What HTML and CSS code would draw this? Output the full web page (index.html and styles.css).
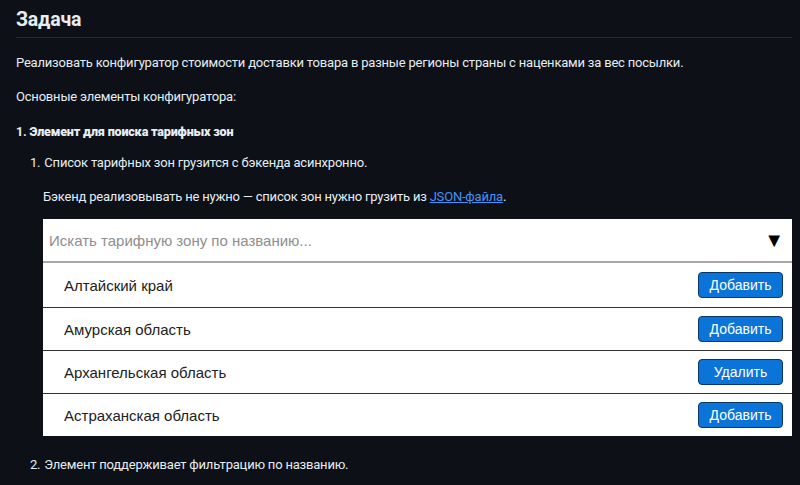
FILE: index.html
```html
<!DOCTYPE html>
<html lang="ru">
<head>
<meta charset="utf-8">
<link rel="stylesheet" href="styles.css">
</head>
<body>
<div class="page">
  <h2 class="title">Задача</h2>
  <p class="p p-first">Реализовать конфигуратор стоимости доставки товара в разные регионы страны с наценками за вес посылки.</p>
  <p class="p">Основные элементы конфигуратора:</p>
  <div class="item l1"><span class="num">1.</span><strong>Элемент для поиска тарифных зон</strong></div>
  <div class="item l2"><span class="num">1.</span>Список тарифных зон грузится с бэкенда асинхронно.</div>
  <div class="sub">
    <p class="p p-sub">Бэкенд реализовывать не нужно — список зон нужно грузить из <a class="link" href="#">JSON-файла</a>.</p>
    <div class="widget">
      <div class="search">
        <span class="placeholder">Искать тарифную зону по названию...</span>
        <span class="arrow">▼</span>
      </div>
      <div class="row first"><span class="name">Алтайский край</span><button class="btn">Добавить</button></div>
      <div class="row"><span class="name">Амурская область</span><button class="btn">Добавить</button></div>
      <div class="row"><span class="name">Архангельская область</span><button class="btn">Удалить</button></div>
      <div class="row"><span class="name">Астраханская область</span><button class="btn">Добавить</button></div>
    </div>
  </div>
  <div class="item l2 last"><span class="num">2.</span>Элемент поддерживает фильтрацию по названию.</div>
</div>
</body>
</html>
```

FILE: styles.css
```css
html, body {
  margin: 0;
  padding: 0;
  background: #0d1117;
}
.page {
  padding: 0 8px 0 16px;
  color: #e6edf3;
  font-family: Roboto, "Noto Sans", sans-serif;
  font-size: 13px;
  letter-spacing: -0.2px;
  line-height: 21px;
}
.title {
  margin: 0;
  padding: 7px 0 4px;
  font-family: Roboto, "Noto Sans", sans-serif;
  font-size: 19.5px;
  letter-spacing: -0.2px;
  line-height: 26px;
  font-weight: 700;
  border-bottom: 1px solid #262c36;
}
.p {
  margin: 13px 0 0;
}
.p-first {
  margin-top: 13.5px;
}
.item {
  display: flex;
}
.num {
  margin-right: 4px;
}
.l1 {
  margin-top: 14px;
  font-weight: 700;
  font-size: 12.6px;
  letter-spacing: -0.2px;
}
.l1 .num {
  margin-right: 3px;
}
.l2 {
  margin-top: 10px;
  padding-left: 14px;
}
.sub {
  padding-left: 27px;
}
.p-sub {
  margin-top: 13px;
}
.link {
  color: #4493f8;
  text-decoration: underline;
}
.widget {
  margin-top: 12.5px;
  background: #ffffff;
  font-family: "Liberation Sans", Arial, sans-serif;
  font-size: 15px;
  letter-spacing: 0;
  color: #222;
}
.search {
  height: 42px;
  display: flex;
  align-items: center;
  justify-content: space-between;
  padding: 0 8px 0 6px;
  border-bottom: 2px solid #a8a8a8;
}
.placeholder {
  color: #8e8e8e;
}
.arrow {
  color: #000;
  font-size: 20px;
  line-height: 20px;
}
.row {
  height: 42px;
  display: flex;
  align-items: center;
  justify-content: space-between;
  padding: 0 9px 0 21px;
  border-top: 1px solid #333;
}
.row.first {
  border-top: none;
  height: 44px;
}
.btn {
  width: 85px;
  height: 26px;
  background: #0b74d8;
  color: #fff;
  border: 1px solid #0a3766;
  border-radius: 4px;
  font-family: "Liberation Sans", Arial, sans-serif;
  font-size: 14px;
  padding: 0;
}
.last {
  margin-top: 17.5px;
}
```
